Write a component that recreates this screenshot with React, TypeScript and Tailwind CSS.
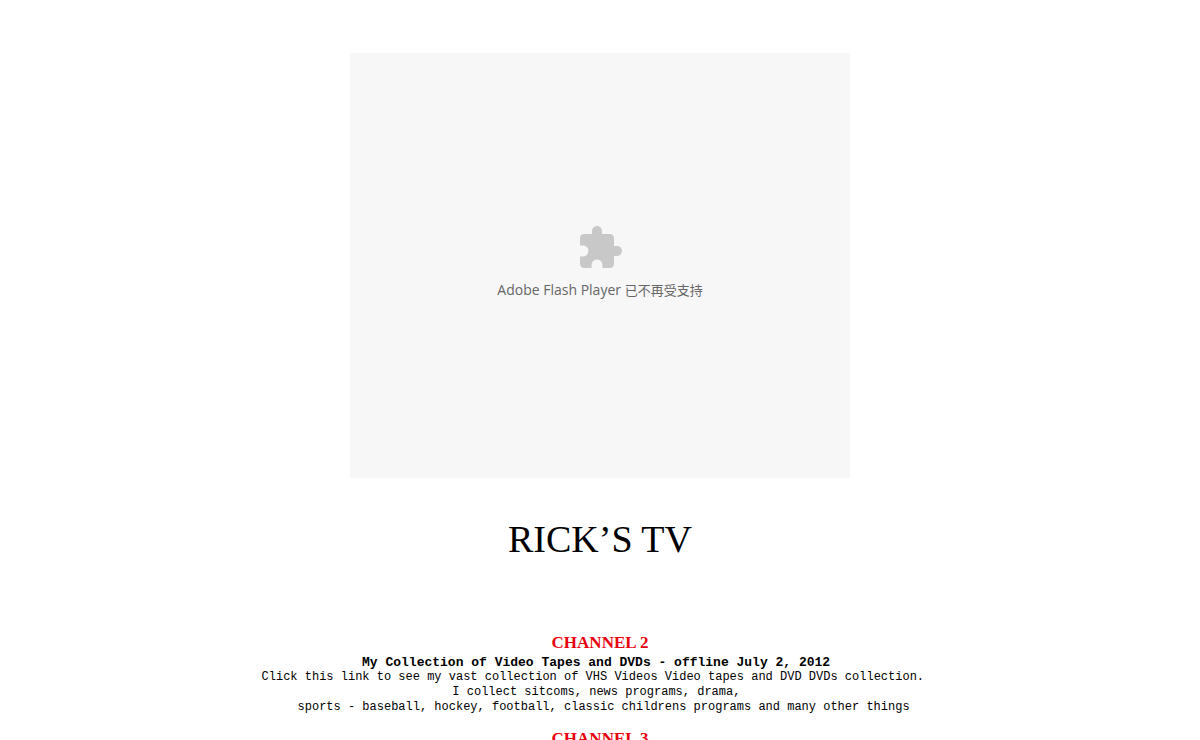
interface Channel {
  name: string
  title?: string
  lines: string[]
}

const channels: Channel[] = [
  {
    name: "CHANNEL 2",
    title: "My Collection of Video Tapes and DVDs - offline July 2, 2012\u00a0",
    lines: [
      "Click this link to see my vast collection of VHS Videos Video tapes and DVD DVDs collection.\u00a0\u00a0",
      "I collect sitcoms, news programs, drama,\u00a0",
      "\u00a0sports - baseball, hockey, football, classic childrens programs and many other things",
    ],
  },
  { name: "CHANNEL 3", lines: [] },
]

function FlashPlaceholder() {
  return (
    <div className="flex h-[425px] w-full max-w-[500px] flex-col items-center justify-center bg-[#f7f7f7] pb-2">
      <svg className="h-12 w-12" viewBox="0 0 24 24" fill="#c8c8c8" aria-hidden="true">
        <path d="M20.5 11H19V7c0-1.1-.9-2-2-2h-4V3.5C13 2.12 11.88 1 10.5 1S8 2.12 8 3.5V5H4c-1.1 0-1.99.9-1.99 2v3.8H3.5c1.49 0 2.7 1.21 2.7 2.7s-1.21 2.7-2.7 2.7H2V20c0 1.1.9 2 2 2h3.8v-1.5c0-1.49 1.21-2.7 2.7-2.7 1.49 0 2.7 1.21 2.7 2.7V22H17c1.1 0 2-.9 2-2v-4h1.5c1.38 0 2.5-1.12 2.5-2.5S21.88 11 20.5 11z" />
      </svg>
      <p className="mt-2 font-['Open_Sans','Noto_Sans_CJK_SC',sans-serif] text-[14px] leading-5 text-[#666]">
        Adobe Flash Player <span className="text-[13px]">已不再受支持</span>
      </p>
    </div>
  )
}

function ChannelBlock({ name, title, lines }: Channel) {
  return (
    <section className="mb-3">
      <h2 className="text-[17px] leading-6 font-bold text-[#e8000d]">{name}</h2>
      {title && <h3 className="font-['Liberation_Mono',monospace] text-[13px] leading-[15px] font-bold">{title}</h3>}
      {lines.map((line) => (
        <p key={line} className="font-['Liberation_Mono',monospace] text-[12px] leading-[15px]">
          {line}
        </p>
      ))}
    </section>
  )
}

export default function App() {
  return (
    <main className="flex flex-col items-center bg-white pt-[53px] text-center font-['Liberation_Serif',serif] text-black">
      <FlashPlaceholder />
      <h1 className="mt-9 text-[38px] leading-[50px]">RICK’S TV</h1>
      <div className="mt-[67px]">
        {channels.map((channel) => (
          <ChannelBlock key={channel.name} {...channel} />
        ))}
      </div>
    </main>
  )
}
